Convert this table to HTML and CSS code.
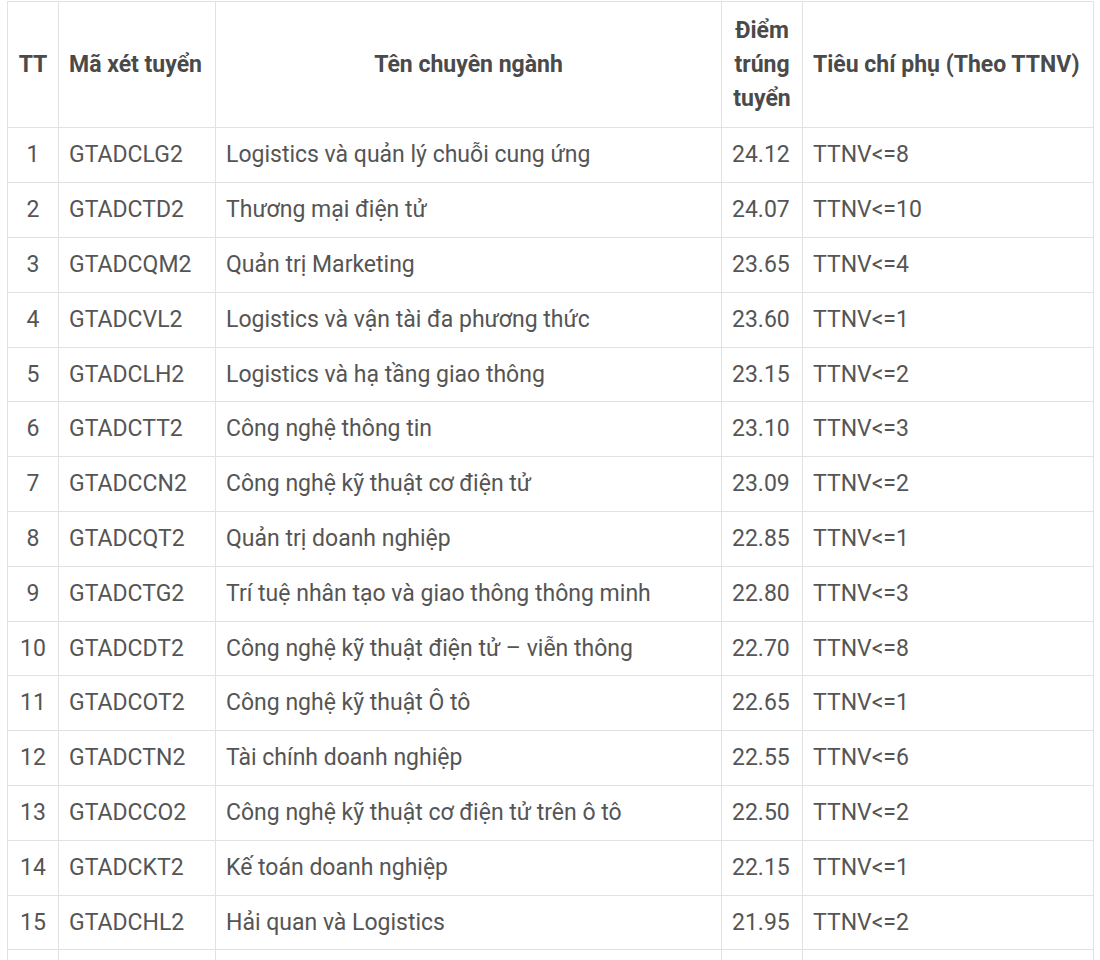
FILE: index.html
```html
<!DOCTYPE html>
<html lang="vi">
<head>
  <meta charset="UTF-8" />
  <meta name="viewport" content="width=device-width, initial-scale=1.0" />
  <title>Điểm trúng tuyển</title>
  <link rel="stylesheet" href="styles.css">
</head>
<body>
  <table class="score-table">
    <colgroup>
      <col class="col-tt">
      <col class="col-code">
      <col class="col-name">
      <col class="col-score">
      <col class="col-note">
    </colgroup>
    <thead>
      <tr>
        <th class="center">TT</th>
        <th>Mã xét tuyển</th>
        <th class="center">Tên chuyên ngành</th>
        <th class="center">Điểm trúng tuyển</th>
        <th>Tiêu chí phụ (Theo TTNV)</th>
      </tr>
    </thead>
    <tbody>
      <tr><td class="center">1</td><td>GTADCLG2</td><td>Logistics và quản lý chuỗi cung ứng</td><td>24.12</td><td>TTNV&lt;=8</td></tr>
      <tr><td class="center">2</td><td>GTADCTD2</td><td>Thương mại điện tử</td><td>24.07</td><td>TTNV&lt;=10</td></tr>
      <tr><td class="center">3</td><td>GTADCQM2</td><td>Quản trị Marketing</td><td>23.65</td><td>TTNV&lt;=4</td></tr>
      <tr><td class="center">4</td><td>GTADCVL2</td><td>Logistics và vận tài đa phương thức</td><td>23.60</td><td>TTNV&lt;=1</td></tr>
      <tr><td class="center">5</td><td>GTADCLH2</td><td>Logistics và hạ tầng giao thông</td><td>23.15</td><td>TTNV&lt;=2</td></tr>
      <tr><td class="center">6</td><td>GTADCTT2</td><td>Công nghệ thông tin</td><td>23.10</td><td>TTNV&lt;=3</td></tr>
      <tr><td class="center">7</td><td>GTADCCN2</td><td>Công nghệ kỹ thuật cơ điện tử</td><td>23.09</td><td>TTNV&lt;=2</td></tr>
      <tr><td class="center">8</td><td>GTADCQT2</td><td>Quản trị doanh nghiệp</td><td>22.85</td><td>TTNV&lt;=1</td></tr>
      <tr><td class="center">9</td><td>GTADCTG2</td><td>Trí tuệ nhân tạo và giao thông thông minh</td><td>22.80</td><td>TTNV&lt;=3</td></tr>
      <tr><td class="center">10</td><td>GTADCDT2</td><td>Công nghệ kỹ thuật điện tử – viễn thông</td><td>22.70</td><td>TTNV&lt;=8</td></tr>
      <tr><td class="center">11</td><td>GTADCOT2</td><td>Công nghệ kỹ thuật Ô tô</td><td>22.65</td><td>TTNV&lt;=1</td></tr>
      <tr><td class="center">12</td><td>GTADCTN2</td><td>Tài chính doanh nghiệp</td><td>22.55</td><td>TTNV&lt;=6</td></tr>
      <tr><td class="center">13</td><td>GTADCCO2</td><td>Công nghệ kỹ thuật cơ điện tử trên ô tô</td><td>22.50</td><td>TTNV&lt;=2</td></tr>
      <tr><td class="center">14</td><td>GTADCKT2</td><td>Kế toán doanh nghiệp</td><td>22.15</td><td>TTNV&lt;=1</td></tr>
      <tr><td class="center">15</td><td>GTADCHL2</td><td>Hải quan và Logistics</td><td>21.95</td><td>TTNV&lt;=2</td></tr>
      <tr><td class="center">16</td><td>GTADCKX2</td><td>Kinh tế xây dựng</td><td>21.90</td><td>TTNV&lt;=1</td></tr>
    </tbody>
  </table>
</body>
</html>
```

FILE: styles.css
```css
body {
  margin: 0;
  padding: 1px 0 0 7px;
  background: #fff;
  font-family: Roboto, "Noto Sans", Arial, sans-serif;
  font-size: 23px;
  line-height: 33.8px;
  color: #555;
}
.score-table {
  border-collapse: collapse;
  table-layout: fixed;
  width: 1086px;
}
.col-tt { width: 51px; }
.col-code { width: 157px; }
.col-name { width: 506px; }
.col-score { width: 81px; }
.col-note { width: 291px; }
.score-table th,
.score-table td {
  border: 1.5px solid #e2e2e2;
  padding: 10px 10px;
  text-align: left;
  vertical-align: middle;
}
.score-table th {
  font-weight: bold;
  color: #4a4a4a;
  padding: 12px 10px;
}
.score-table .center {
  text-align: center;
}
```
